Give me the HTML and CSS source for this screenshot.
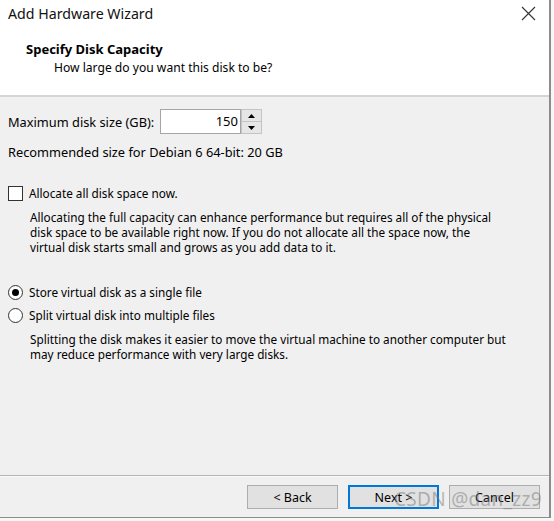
FILE: index.html
```html
<!DOCTYPE html>
<html>
<head>
<meta charset="utf-8">
<link rel="stylesheet" href="styles.css">
</head>
<body>
<div class="dialog">
  <div class="header">
    <div class="titlebar">
      <span class="title">Add Hardware Wizard</span>
      <svg class="close" width="15" height="15" viewBox="0 0 15 15"><path d="M1 1 L14 14 M14 1 L1 14" stroke="#333" stroke-width="1.1" fill="none"/></svg>
    </div>
    <div class="heading">Specify Disk Capacity</div>
    <div class="subheading">How large do you want this disk to be?</div>
  </div>
  <div class="content">
    <div class="size-row">
      <span class="label">Maximum disk size (GB):</span>
      <div class="spin">
        <div class="spin-input">150</div>
        <div class="spin-btns">
          <div class="spin-btn"><svg width="7" height="4" viewBox="0 0 7 4"><path d="M0 4 L3.5 0 L7 4 Z" fill="#000"/></svg></div>
          <div class="spin-btn"><svg width="7" height="4" viewBox="0 0 7 4"><path d="M0 0 L3.5 4 L7 0 Z" fill="#000"/></svg></div>
        </div>
      </div>
    </div>
    <div class="recommend">Recommended size for Debian 6 64-bit: 20 GB</div>
    <div class="option check-row">
      <span class="checkbox"></span>
      <span>Allocate all disk space now.</span>
    </div>
    <div class="desc desc1">Allocating the full capacity can enhance performance but requires all of the physical<br>disk space to be available right now. If you do not allocate all the space now, the<br>virtual disk starts small and grows as you add data to it.</div>
    <div class="option radio-row1">
      <span class="radio checked"></span>
      <span>Store virtual disk as a single file</span>
    </div>
    <div class="option radio-row2">
      <span class="radio"></span>
      <span>Split virtual disk into multiple files</span>
    </div>
    <div class="desc desc2">Splitting the disk makes it easier to move the virtual machine to another computer but<br>may reduce performance with very large disks.</div>
  </div>
  <div class="footer">
    <button class="btn">&lt; Back</button>
    <button class="btn primary">Next &gt;</button>
    <button class="btn">Cancel</button>
  </div>
  <div class="watermark">CSDN @dan_zz9</div>
</div>
</body>
</html>
```
FILE: styles.css
```css
* { box-sizing: border-box; }
html, body { margin: 0; padding: 0; }
body {
  width: 554px;
  height: 521px;
  background: #f7f7f7;
  font-family: "Noto Sans", "Open Sans", sans-serif;
  font-size: 11.75px;
  color: #000;
  overflow: hidden;
}
.dialog {
  position: relative;
  width: 551px;
  height: 518px;
  background: #f0f0f0;
  border-right: 2px solid #8c8c8c;
  border-bottom: 1px solid #8c8c8c;
  display: flex;
  flex-direction: column;
}
.header {
  background: #fff;
  height: 97px;
  border-bottom: 2px solid #d5d5d5;
}
.titlebar {
  height: 27px;
  display: flex;
  align-items: center;
  justify-content: space-between;
  padding: 0 13px 0 8px;
}
.title { font-size: 14.2px; color: #111; }
.close { display: block; }
.heading {
  margin-top: 13px;
  padding-left: 26px;
  font-weight: bold;
  font-size: 13px;
  line-height: 18px;
}
.subheading {
  padding-left: 54px;
  font-size: 12.1px;
  line-height: 20px;
}
.content {
  flex: 1;
  padding: 12px 0 0 8px;
  display: flex;
  flex-direction: column;
}
.size-row {
  display: flex;
  align-items: center;
  height: 25px;
  font-size: 12.8px;
}
.label { width: 152px; }
.spin { display: flex; height: 25px; }
.spin-input {
  width: 81px;
  height: 25px;
  background: #fff;
  border: 1px solid #a5a5a5;
  text-align: right;
  padding-right: 2px;
  font-size: 13px;
  line-height: 22px;
}
.spin-btns {
  display: flex;
  flex-direction: column;
  width: 21px;
  border: 1px solid #c4c4c4;
  border-left: none;
}
.spin-btn {
  flex: 1;
  display: flex;
  align-items: center;
  justify-content: center;
  background: #e6e6e6;
  border-left: 1px solid #c4c4c4;
}
.spin-btn + .spin-btn { border-top: 1px solid #c4c4c4; }
.recommend {
  margin-top: 10px;
  line-height: 16px;
  font-size: 12.8px;
}
.option {
  display: flex;
  align-items: center;
  height: 16px;
  gap: 6px;
}
.check-row { margin-top: 25px; }
.checkbox {
  width: 15px;
  height: 15px;
  background: #fff;
  border: 1px solid #333;
}
.radio {
  width: 15px;
  height: 15px;
  border: 1px solid #333;
  border-radius: 50%;
  background: #fff;
  display: flex;
  align-items: center;
  justify-content: center;
}
.radio.checked::after {
  content: "";
  width: 7px;
  height: 7px;
  border-radius: 50%;
  background: #000;
}
.desc {
  padding-left: 22px;
  line-height: 15px;
}
.desc1 { margin-top: 9px; }
.radio-row1 { margin-top: 29px; }
.radio-row2 { margin-top: 7px; }
.desc2 { margin-top: 9px; }
.footer {
  height: 42px;
  border-top: 1px solid #b4b4b4;
  box-shadow: inset 0 1px 0 #fafafa;
  display: flex;
  justify-content: flex-end;
  align-items: flex-start;
  padding: 9px 9px 0 0;
  gap: 10px;
}
.btn {
  width: 91px;
  height: 24px;
  background: #e1e1e1;
  border: 1px solid #adadad;
  font-family: inherit;
  font-size: 12.5px;
  color: #000;
  padding: 0;
}
.btn.primary { border: 1px solid #0078d7; box-shadow: inset 0 0 0 1px #0078d7; }
.watermark {
  position: absolute;
  left: 394px;
  top: 486px;
  font-size: 19px;
  color: rgba(120, 120, 120, 0.5);
  letter-spacing: 0.3px;
  pointer-events: none;
}
```
